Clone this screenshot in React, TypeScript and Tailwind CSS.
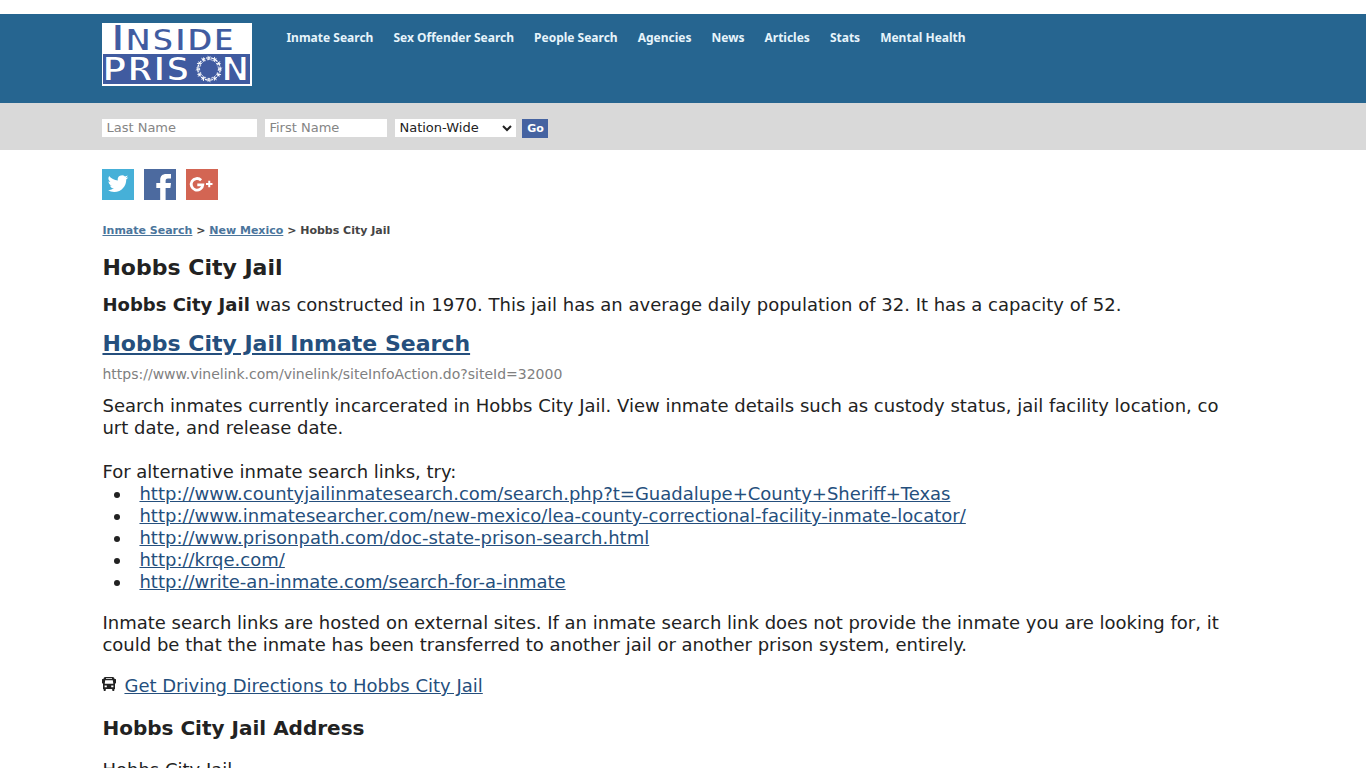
import React from 'react';

const navItems = [
  'Inmate Search',
  'Sex Offender Search',
  'People Search',
  'Agencies',
  'News',
  'Articles',
  'Stats',
  'Mental Health',
];

const alternativeLinks = [
  'http://www.countyjailinmatesearch.com/search.php?t=Guadalupe+County+Sheriff+Texas',
  'http://www.inmatesearcher.com/new-mexico/lea-county-correctional-facility-inmate-locator/',
  'http://www.prisonpath.com/doc-state-prison-search.html',
  'http://krqe.com/',
  'http://write-an-inmate.com/search-for-a-inmate',
];

function Logo() {
  const barbs = Array.from({ length: 12 }, (_, i) => i * 30);
  return (
    <svg width="150" height="63" viewBox="0 0 150 63" role="img" aria-label="Inside Prison" className="block">
      <rect width="150" height="63" fill="#fff" />
      <rect x="1" y="31" width="147" height="30" fill="#405ba0" />
      <g fontFamily="'DejaVu Sans', sans-serif" fontWeight="700" strokeWidth="1.8">
        <text x="9" y="28" fontSize="32" fill="#405ba0" stroke="#fff">
          <tspan fontSize="37">I</tspan>NSIDE
        </text>
        <g fill="#fff" stroke="#405ba0">
          <text x="0" y="58" fontSize="34">PRIS</text>
          <text x="119" y="58" fontSize="34">N</text>
        </g>
      </g>
      <g fill="none" stroke="#fff" transform="translate(107 46)">
        <circle r="11.2" strokeWidth="1.3" strokeDasharray="3.5 1" />
        <circle r="9.4" strokeWidth="0.8" strokeDasharray="2 1.5" />
        {barbs.map((a) => (
          <path key={a} d="M-1.2 -13.2 L1 -9 M1.2 -12.8 L-1 -9" strokeWidth="0.8" transform={`rotate(${a})`} />
        ))}
      </g>
    </svg>
  );
}

function TwitterIcon() {
  return (
    <svg viewBox="0 0 32 31" className="block h-[31px] w-8 bg-[#46b0d8]">
      <path
        transform="translate(5.7 4.3) scale(.86)"
        fill="#fff"
        d="M23.95 4.57a10 10 0 0 1-2.82.78 4.96 4.96 0 0 0 2.16-2.73c-.95.56-2 .96-3.13 1.19a4.92 4.92 0 0 0-8.38 4.48C7.69 8.09 4.07 6.13 1.64 3.16a4.92 4.92 0 0 0 1.52 6.57 4.9 4.9 0 0 1-2.23-.61v.06a4.92 4.92 0 0 0 3.95 4.83 5 5 0 0 1-2.21.08 4.94 4.94 0 0 0 4.6 3.42A9.87 9.87 0 0 1 0 19.54a14 14 0 0 0 7.55 2.21c9.05 0 14-7.5 14-13.98 0-.21 0-.42-.02-.63a9.94 9.94 0 0 0 2.46-2.55z"
      />
    </svg>
  );
}

function FacebookIcon() {
  return (
    <svg viewBox="0 0 32 31" className="block h-[31px] w-8 bg-[#4c6a9f]">
      <path fill="#fff" d="M16.2 31V19H12.300v-5h3.900v-3c0-4 2.300-6 6-6h4.800v4.600h-3c-2 0-2.400.9-2.400 2.400V14H27l-.6 5H21.600v12z" />
    </svg>
  );
}

function GooglePlusIcon() {
  return (
    <svg viewBox="0 0 32 31" className="block h-[31px] w-8 bg-[#d36553]">
      <g fill="none" stroke="#fff">
        <path d="M15.100 11.200A5.800 5.800 0 1 0 16.800 15.800H11.300" strokeWidth="2.800" />
        <path d="M20 15h6.500M23.250 11.800v6.400" strokeWidth="2" />
      </g>
    </svg>
  );
}

function BusIcon() {
  return (
    <svg viewBox="0 0 14 14" className="h-[14px] w-[14px] shrink-0" aria-hidden="true">
      <path
        fill="#222"
        fillRule="evenodd"
        d="M3.500 0h7C11.800 0 12.500.8 12.500 2h1c.3 0 .5.2.5.500V6c0 .3-.2.500-.500.500H13V12h-.6v1c0 .6-.4 1-1.100 1s-1.100-.4-1.100-1v-1H3.800v1c0 .6-.4 1-1.100 1s-1.100-.4-1.100-1v-1H1V6.500H.5C.2 6.500 0 6.300 0 6V2.500C0 2.200.2 2 .5 2h1C1.500.8 2.200 0 3.500 0zM4 1.200v.8h6v-.8zM3.200 3.200L2.700 6.800h8.600l-.5-3.600zM2.600 8.500v1.800h2.200V8.500zM9.200 8.500v1.800h2.200V8.500z"
      />
    </svg>
  );
}

export default function App() {
  return (
    <div className="min-h-screen bg-white pt-3.5 font-['DejaVu_Sans',Verdana,sans-serif] text-lg leading-[22px] text-[#222]">
      <header className="bg-[#266590]">
        <div className="mx-auto flex h-[89px] w-[85%] items-start pt-[9px]">
          <a href="#home">
            <Logo />
          </a>
          <nav className="ml-[34px] flex flex-wrap gap-x-5 pt-[5px] font-['Noto_Sans',sans-serif] text-xs leading-5 font-bold text-[#e6f4fb]">
            {navItems.map((item) => (
              <a key={item} href="#nav">
                {item}
              </a>
            ))}
          </nav>
        </div>
      </header>

      <div className="bg-[#d9d9d9]">
        <form className="mx-auto flex h-[47px] w-[85%] items-center pt-[3px] text-[13px]" onSubmit={(e) => e.preventDefault()}>
          <input aria-label="Last Name" placeholder="Last Name" className="h-[18px] w-[155px] bg-white px-1 placeholder:text-[#858585]" />
          <input aria-label="First Name" placeholder="First Name" className="ml-2 h-[18px] w-[122px] bg-white px-1 placeholder:text-[#858585]" />
          <span className="relative ml-2 flex">
            <select aria-label="State" className="h-[18px] w-[121px] appearance-none bg-white pl-1 leading-[18px] text-[#222]">
              <option>Nation-Wide</option>
            </select>
            <svg viewBox="0 0 10 7" className="pointer-events-none absolute top-1.5 right-1 h-[7px] w-2.5">
              <path d="M1 1l4 4 4-4" fill="none" stroke="#222" strokeWidth="2" />
            </svg>
          </span>
          <button type="submit" className="ml-1.5 h-[19px] w-[26px] bg-[#4563a1] text-[11px] leading-[19px] font-bold text-white">
            Go
          </button>
        </form>
      </div>

      <main className="mx-auto w-[85%]">
        <div className="flex gap-[10px] pt-[19px]">
          <a href="#twitter" aria-label="Twitter"><TwitterIcon /></a>
          <a href="#facebook" aria-label="Facebook"><FacebookIcon /></a>
          <a href="#google-plus" aria-label="Google Plus"><GooglePlusIcon /></a>
        </div>

        <div className="mt-[21px] text-[11px] leading-5 font-bold text-[#444]">
          <a href="#inmate-search" className="text-[#4b759c] underline">Inmate Search</a> &gt;{' '}
          <a href="#new-mexico" className="text-[#4b759c] underline">New Mexico</a> &gt; Hobbs City Jail
        </div>

        <h1 className="mt-[13px] text-[22px] leading-7 font-bold">Hobbs City Jail</h1>
        <p className="mt-3">
          <strong>Hobbs City Jail</strong> was constructed in 1970. This jail has an average daily population of 32. It has a capacity of 52.
        </p>

        <h2 className="mt-3.5 text-[22px] leading-7 font-bold">
          <a href="#search" className="text-[#254f7d] underline">Hobbs City Jail Inmate Search</a>
        </h2>
        <div className="mt-1.5 text-sm leading-5 text-[#808080]">https://www.vinelink.com/vinelink/siteInfoAction.do?siteId=32000</div>
        <p className="mt-[11px]">
          Search inmates currently incarcerated in Hobbs City Jail. View inmate details such as custody status, jail facility location, co
          <br />
          urt date, and release date.
        </p>

        <p className="mt-[22px]">For alternative inmate search links, try:</p>
        <ul className="list-disc pl-[30px]">
          {alternativeLinks.map((link) => (
            <li key={link} className="pl-[7px]">
              <a href={link} className="text-[#254f7d] underline">{link}</a>
            </li>
          ))}
        </ul>

        <p className="mt-[19px]">
          Inmate search links are hosted on external sites. If an inmate search link does not provide the inmate you are looking for, it
          <br />
          could be that the inmate has been transferred to another jail or another prison system, entirely.
        </p>

        <p className="mt-[19px] flex gap-2">
          <span className="pt-0.5">
            <BusIcon />
          </span>
          <a href="#directions" className="text-[#254f7d] underline">Get Driving Directions to Hobbs City Jail</a>
        </p>

        <h3 className="mt-[17px] text-xl leading-7 font-bold">Hobbs City Jail Address</h3>
        <p className="mt-[17px]">Hobbs City Jail</p>
      </main>
    </div>
  );
}
